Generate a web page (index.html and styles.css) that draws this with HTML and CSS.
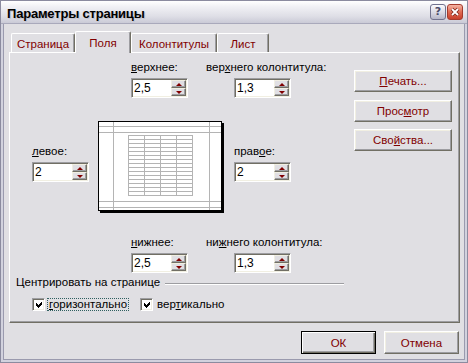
FILE: index.html
```html
<!DOCTYPE html>
<html lang="ru">
<head>
  <meta charset="UTF-8">
  <title>Параметры страницы</title>
  <link rel="stylesheet" href="styles.css">
</head>
<body>
  <div class="window">
    <div class="titlebar">
      <span class="title">Параметры страницы</span>
      <div class="caption-buttons">
        <span class="cap-btn help">?</span>
        <span class="cap-btn close">
          <svg width="14" height="14" viewBox="0 0 14 14">
            <path d="M4 4L10 10M10 4L4 10" stroke="#7a2418" stroke-width="3.2" fill="none"/>
            <path d="M4 4L10 10M10 4L4 10" stroke="#fff" stroke-width="1.8" fill="none"/>
          </svg>
        </span>
      </div>
    </div>

    <div class="frame">
      <div class="client">
        <div class="tabs">
          <div class="tab tab-wide1">Страница</div>
          <div class="tab active">Поля</div>
          <div class="tab tab-wide2">Колонтитулы</div>
          <div class="tab tab-last">Лист</div>
        </div>

        <div class="panel">
          <div class="panel-main">
            <div class="margins">
              <div class="field f-top">
                <span class="label"><u>в</u>ерхнее:</span>
                <div class="spin"><span class="value">2,5</span><span class="arrows"><span class="arr up"></span><span class="arr down"></span></span></div>
              </div>
              <div class="field f-header">
                <span class="label label-wide">вер<u>х</u>него колонтитула:</span>
                <div class="spin"><span class="value">1,3</span><span class="arrows"><span class="arr up"></span><span class="arr down"></span></span></div>
              </div>

              <div class="field f-left">
                <span class="label"><u>л</u>евое:</span>
                <div class="spin"><span class="value">2</span><span class="arrows"><span class="arr up"></span><span class="arr down"></span></span></div>
              </div>
              <svg class="preview" width="126" height="92" viewBox="0 0 126 92" shape-rendering="crispEdges">
                <rect x="2" y="2" width="124" height="90" fill="#000"/>
                <rect x="0" y="0" width="124" height="90" fill="#000"/>
                <rect x="1" y="1" width="122" height="88" fill="#fff"/>
                <path stroke="#b4b4b4" fill="none" d="M1 5.5H123M1 11.5H123M1 80.5H123M1 86.5H123M15.5 1V89M111.5 1V89"/>
                <path stroke="#b4b4b4" fill="none" d="M30 14.5H95M30 18.5H95M30 22.5H95M30 26.5H95M30 30.5H95M30 34.5H95M30 38.5H95M30 42.5H95M30 46.5H95M30 50.5H95M30 54.5H95M30 58.5H95M30 62.5H95M30 66.5H95M30 70.5H95M30 74.5H95M30.5 14V75M46.5 14V75M62.5 14V75M78.5 14V75M94.5 14V75"/>
              </svg>
              <div class="field f-right">
                <span class="label">прав<u>о</u>е:</span>
                <div class="spin"><span class="value">2</span><span class="arrows"><span class="arr up"></span><span class="arr down"></span></span></div>
              </div>

              <div class="field f-bottom">
                <span class="label"><u>н</u>ижнее:</span>
                <div class="spin"><span class="value">2,5</span><span class="arrows"><span class="arr up"></span><span class="arr down"></span></span></div>
              </div>
              <div class="field f-footer">
                <span class="label label-wide">ни<u>ж</u>него колонтитула:</span>
                <div class="spin"><span class="value">1,3</span><span class="arrows"><span class="arr up"></span><span class="arr down"></span></span></div>
              </div>
            </div>

            <div class="group">
              <div class="group-title">Центрировать на странице</div>
              <div class="checks">
                <label class="check">
                  <span class="box"><svg width="9" height="9" viewBox="0 0 9 9" shape-rendering="crispEdges"><polygon points="1,3 3,5 7,1 7,4 3,8 1,6" fill="#000"/></svg></span>
                  <span class="check-label focused"><u>г</u>оризонтально</span>
                </label>
                <label class="check">
                  <span class="box"><svg width="9" height="9" viewBox="0 0 9 9" shape-rendering="crispEdges"><polygon points="1,3 3,5 7,1 7,4 3,8 1,6" fill="#000"/></svg></span>
                  <span class="check-label">вер<u>т</u>икально</span>
                </label>
              </div>
            </div>
          </div>

          <div class="side">
            <button class="btn side-btn"><u>П</u>ечать...</button>
            <button class="btn side-btn">Прос<u>м</u>отр</button>
            <button class="btn side-btn">Сво<u>й</u>ства...</button>
          </div>
        </div>

        <div class="dialog-buttons">
          <button class="btn default">ОК</button>
          <button class="btn">Отмена</button>
        </div>
      </div>
    </div>
  </div>
</body>
</html>
```

FILE: styles.css
```css
* {
  box-sizing: border-box;
}
body {
  margin: 0;
  font-family: "Liberation Sans", Arial, sans-serif;
  font-size: 11.5px;
  color: #000;
  background: #e0dfe3;
}
u {
  text-decoration: underline;
  text-underline-offset: 1px;
}

/* window frame */
.window {
  width: 468px;
  height: 363px;
  display: flex;
  flex-direction: column;
  border: 1px solid #8b8b9f;
  background: #d2d2de;
}
.titlebar {
  height: 23px;
  flex: none;
  display: flex;
  align-items: center;
  justify-content: space-between;
  padding: 0 4px 0 6px;
  background: linear-gradient(#ffffff 0%, #f1f1f5 25%, #dedee6 70%, #cacad6 100%);
  border-bottom: 1px solid #a9a9bb;
}
.title {
  margin-top: 2px;
  font-size: 13px;
  font-weight: bold;
  letter-spacing: -0.2px;
  color: #000;
  text-shadow: 1px 1px 0 #c4c4cf;
}
.caption-buttons {
  display: flex;
  gap: 1px;
}
.cap-btn {
  width: 16px;
  height: 16px;
  border-radius: 3px;
  display: flex;
  align-items: center;
  justify-content: center;
}
.help {
  border: 1px solid #72728e;
  background: linear-gradient(#fbfbfd, #d6d6e2 60%, #b6b6c8);
  color: #4a4a68;
  font-family: "DejaVu Sans", sans-serif;
  font-weight: bold;
  font-size: 11px;
  line-height: 14px;
}
.close {
  border: 1px solid #a43a2c;
  background: linear-gradient(#f4b4a4, #e06a52 50%, #c8402c);
}
.frame {
  flex: 1;
  padding: 0 2px 2px;
  display: flex;
}
.client {
  flex: 1;
  border: 1px solid #9a9aae;
  border-top: none;
  background: #e0dfe3;
  padding: 7px 4px 5px 5px;
}

/* tabs */
.tabs {
  display: flex;
  align-items: flex-end;
  height: 21px;
  padding-left: 2px;
}
.tab {
  height: 19px;
  width: 64px;
  padding-top: 2px;
  line-height: 16px;
  text-align: center;
  color: #800000;
  border: 1px solid;
  border-color: #fff #716f64 transparent #fff;
  border-bottom: none;
  border-radius: 2px 2px 0 0;
  box-shadow: inset -1px 0 #9d9da1;
}
.tab.active {
  width: 56px;
  height: 22px;
  padding-top: 3px;
  margin-bottom: -1px;
  position: relative;
  z-index: 1;
  background: #e0dfe3;
}
.tab-wide2 {
  width: 86px;
}
.tab-last {
  width: 52px;
}

/* panel */
.panel {
  height: 271px;
  display: flex;
  padding: 8px 7px 0 0;
  border: 1px solid;
  border-color: #fff #716f64 #716f64 #fff;
  box-shadow: inset -1px -1px #9d9da1;
}
.panel-main {
  flex: 1;
  display: flex;
  flex-direction: column;
}
.margins {
  display: grid;
  grid-template-columns: 57px 127px 57px;
  grid-template-rows: auto auto auto;
  column-gap: 9px;
  row-gap: 23px;
  margin-left: 22px;
}
.field {
  display: flex;
  flex-direction: column;
  align-items: flex-start;
}
.label {
  display: block;
  height: 13px;
  line-height: 13px;
  margin-bottom: 4px;
  white-space: nowrap;
}
.f-top, .f-bottom {
  grid-column: 2;
  margin-left: 33px;
}
.f-top, .f-header {
  grid-row: 1;
}
.f-header, .f-footer, .f-right {
  grid-column: 3;
}
.f-left {
  grid-column: 1;
}
.f-left, .f-right {
  grid-row: 2;
  margin-top: 24px;
}
.f-bottom, .f-footer {
  grid-row: 3;
}
.label-wide {
  margin-left: -28px;
}
.preview {
  grid-column: 2;
  grid-row: 2;
  display: block;
}

/* spin edit */
.spin {
  width: 57px;
  height: 20px;
  display: flex;
  padding: 1px;
  border: 1px solid;
  border-color: #9d9da1 #fff #fff #9d9da1;
  box-shadow: inset 1px 1px #716f64, inset -1px -1px #f1efe2;
  background: #fff;
}
.value {
  flex: 1;
  padding-left: 1px;
  line-height: 16px;
  background: #fff;
  font-size: 12px;
}
.arrows {
  width: 15px;
  display: flex;
  flex-direction: column;
}
.arr {
  height: 8px;
  display: flex;
  align-items: center;
  justify-content: center;
  background: #e0dfe3;
  border: 1px solid;
  border-color: #f1efe2 #716f64 #716f64 #f1efe2;
  box-shadow: inset -1px -1px #9d9da1;
}
.arr::before {
  content: "";
  width: 0;
  height: 0;
  border-left: 3px solid transparent;
  border-right: 3px solid transparent;
}
.up::before {
  border-bottom: 3px solid #800000;
}
.down::before {
  border-top: 3px solid #800000;
}

/* group */
.group {
  margin: 3px 0 0 6px;
  width: 328px;
}
.group-title {
  display: flex;
  align-items: center;
  gap: 5px;
  height: 13px;
  line-height: 13px;
  white-space: nowrap;
}
.group-title::after {
  content: "";
  flex: 1;
  border-top: 1px solid #9d9da1;
  border-bottom: 1px solid #fff;
  margin-top: 2px;
}
.checks {
  display: flex;
  align-items: center;
  gap: 11px;
  margin-top: 9px;
  padding-left: 16px;
}
.check {
  display: flex;
  align-items: center;
  gap: 2px;
}
.box {
  width: 13px;
  height: 13px;
  display: flex;
  align-items: center;
  justify-content: center;
  border: 1px solid;
  border-color: #9d9da1 #fff #fff #9d9da1;
  box-shadow: inset 1px 1px #716f64, inset -1px -1px #f1efe2;
  background: #fff;
}
.box svg {
  display: block;
  margin: 0 0 0 1px;
}
.check-label {
  height: 13px;
  line-height: 11px;
  padding: 0 1px;
  border: 1px solid transparent;
}
.check-label.focused {
  border: 1px dotted #2f5f5f;
}

/* buttons */
.btn {
  font-family: inherit;
  font-size: 11.5px;
  color: #800000;
  background: #e0dfe3;
  border: 1px solid;
  border-color: #fff #716f64 #716f64 #fff;
  box-shadow: inset -1px -1px #9d9da1, inset 1px 1px #f1efe2;
  padding: 0;
  width: 75px;
  height: 23px;
}
.side {
  width: 98px;
  display: flex;
  flex-direction: column;
  gap: 7.5px;
  padding-top: 9px;
}
.side-btn {
  width: 98px;
  height: 22px;
}
.dialog-buttons {
  display: flex;
  justify-content: flex-end;
  gap: 8px;
  margin-top: 8px;
  padding-right: 1px;
}
.btn.default {
  border: 1px solid #000;
  box-shadow: inset 1px 1px #fff, inset -1px -1px #716f64, inset -2px -2px #9d9da1;
}
```
